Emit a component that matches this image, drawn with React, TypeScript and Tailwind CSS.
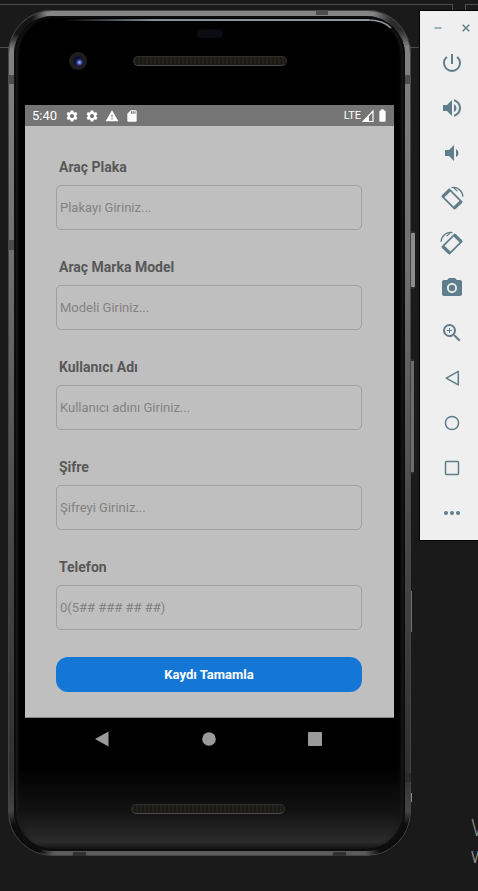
import type { ReactNode } from "react";
import {
  MdBatteryFull,
  MdPhotoCamera,
  MdPowerSettingsNew,
  MdSdCard,
  MdSettings,
  MdVolumeDown,
  MdVolumeUp,
  MdWarning,
  MdZoomIn,
} from "react-icons/md";

type FieldProps = { id: string; label: string; placeholder: string; type?: string };

const fields: FieldProps[] = [
  { id: "plaka", label: "Araç Plaka", placeholder: "Plakayı Giriniz..." },
  { id: "model", label: "Araç Marka Model", placeholder: "Modeli Giriniz..." },
  { id: "kullanici", label: "Kullanıcı Adı", placeholder: "Kullanıcı adını Giriniz..." },
  { id: "sifre", label: "Şifre", placeholder: "Şifreyi Giriniz...", type: "password" },
  { id: "telefon", label: "Telefon", placeholder: "0(5## ### ## ##)", type: "tel" },
];

function Field({ id, label, placeholder, type = "text" }: FieldProps) {
  return (
    <div className="flex flex-col gap-2">
      <label htmlFor={id} className="pl-[3px] text-sm leading-5 font-bold text-[#585858]">
        {label}
      </label>
      <input
        id={id}
        type={type}
        placeholder={placeholder}
        className="h-[45px] w-full rounded-[5px] border border-[#a0a0a0] bg-transparent px-[3px] text-[13px] text-[#585858] outline-none placeholder:text-[#828282]"
      />
    </div>
  );
}

function Speaker() {
  return (
    <div className="h-[10px] w-[154px] rounded-full border border-[#303030] border-b-[#4a4a4a] bg-[repeating-linear-gradient(90deg,#23211c_0px,#23211c_2px,#1a1916_2px,#1a1916_4px)]" />
  );
}

function StatusBar() {
  return (
    <div className="flex h-[21px] items-center justify-between bg-[#757575] pr-1 pl-[7px] text-white">
      <div className="flex items-center gap-2">
        <span className="text-[13px] leading-5">5:40</span>
        <div className="flex items-center gap-[6px]">
          <MdSettings size={14} />
          <MdSettings size={14} />
          <MdWarning size={14} />
          <MdSdCard size={14} />
        </div>
      </div>
      <div className="flex items-center gap-px">
        <span className="text-[11px] leading-5">LTE</span>
        <svg width="12" height="14" viewBox="0 0 12 14" aria-hidden="true">
          <path d="M11 2v10.500H1z" fill="none" stroke="currentColor" strokeWidth="1.200" />
          <path d="M7 6v6.500H1z" fill="currentColor" />
        </svg>
        <MdBatteryFull size={15} />
      </div>
    </div>
  );
}

function NavBar() {
  return (
    <nav className="flex h-[42px] items-center justify-between pr-[67px] pl-[65px] text-[#9b9b9b]">
      <button aria-label="Geri" className="size-6">
        <svg viewBox="0 0 24 24" fill="currentColor">
          <path d="M18.500 4.500v15L5 12z" />
        </svg>
      </button>
      <button aria-label="Ana ekran" className="size-6">
        <svg viewBox="0 0 24 24" fill="currentColor">
          <circle cx="12" cy="12" r="6.800" />
        </svg>
      </button>
      <button aria-label="Son uygulamalar" className="size-6">
        <svg viewBox="0 0 24 24" fill="currentColor">
          <rect x="5" y="5" width="14" height="14" rx="1" />
        </svg>
      </button>
    </nav>
  );
}

function Phone() {
  return (
    <section className="relative flex-1 rounded-[44px] bg-[radial-gradient(circle_at_10px_10px,#151515_14px,transparent_30px),radial-gradient(circle_at_calc(100%-10px)_10px,#2c2c2c_10px,transparent_28px),radial-gradient(circle_at_10px_calc(100%-10px),#0c0c0c_22px,transparent_36px),radial-gradient(circle_at_calc(100%-10px)_calc(100%-10px),#0c0c0c_22px,transparent_36px),linear-gradient(to_bottom,#858585,#707070_30%,#4a4a4a_60%,#303030_90%,#5c5c5c)] px-[6px] pt-[6px] pb-[5px] shadow-[inset_0_0_0_1px_#444444]">
      {/* side keys */}
      <span className="absolute top-[221px] -right-1 h-[58px] w-1 rounded-r-xs border-y-2 border-[#2c2c2c] bg-[#8c8c8c]" />
      <span className="absolute top-[349px] -right-[3px] h-[115px] w-[3px] rounded-r-xs border-y-2 border-[#2c2c2c] bg-[#6c6c6c]" />
      <span className="absolute top-[581px] -right-px h-[41px] w-px bg-[#707070]" />
      <span className="absolute top-[783px] -right-px h-[9px] w-px bg-[#8a8a8a]" />
      {/* antenna bands */}
      <span className="absolute top-[65px] left-0 h-[9px] w-[6px] bg-[#4c4c4c]" />
      <span className="absolute top-[65px] right-0 h-[9px] w-[6px] bg-[#4c4c4c]" />
      <span className="absolute top-[230px] left-0 h-[10px] w-[6px] bg-[#4a4a4a]" />
      <span className="absolute right-0 bottom-[74px] h-[9px] w-[6px] bg-[#2c2c2c]" />
      <span className="absolute top-0 right-[83px] h-[5px] w-3 bg-[#4c4c4c]" />
      <span className="absolute bottom-0 left-[65px] h-1 w-[13px] bg-[#303030]" />
      <span className="absolute right-[65px] bottom-0 h-1 w-[13px] bg-[#303030]" />

      <div className="relative rounded-[39px] bg-[linear-gradient(to_bottom,#000_750px,#121212_795px,#2b2b2b_826px,#101010_834px)] px-[11px] shadow-[inset_0_0_0_2px_#0c0c0c,inset_5px_0_3px_-1px_#1a1a1a,inset_-5px_0_3px_-1px_#1a1a1a]">
        {/* light caught by the top of the glass */}
        <span className="absolute top-[3px] right-[36px] left-[48px] h-[2px] bg-linear-to-r from-transparent via-[#879094] via-30% to-[#8f979b]" />
        <svg viewBox="0 0 24 12" fill="none" className="absolute top-[3px] right-[13px] h-3 w-6" aria-hidden="true">
          <path d="M0 1c9 0 17 2 23 8" stroke="#8f979b" strokeWidth="1.600" />
        </svg>
        <div className="flex flex-col items-center gap-3 pt-[13px] pb-[34px]">
          <div className="h-[9px] w-[26px] rounded-full bg-[#0b0c12]" />
          <div className="grid h-[21px] w-full grid-cols-[1fr_154px_1fr] items-center">
            <div className="ml-11 flex size-[18px] items-center justify-center rounded-full bg-[#1f1f20]">
              <div className="size-[10px] rounded-full bg-[radial-gradient(circle_at_65%_65%,#a9b8ff_0px,#4654b8_2px,#10122e_4px)]" />
            </div>
            <Speaker />
          </div>
        </div>

        <div className="border-b border-[#858585] bg-[#bfbfbf]">
          <StatusBar />
          <form
            onSubmit={(event) => event.preventDefault()}
            className="flex flex-col gap-[27px] pt-[31px] pr-8 pb-[25px] pl-[31px]"
          >
            {fields.map((field) => (
              <Field key={field.id} {...field} />
            ))}
            <button
              type="submit"
              className="h-[35px] w-full rounded-xl bg-[#1477d6] text-[13px] font-bold text-white"
            >
              Kaydı Tamamla
            </button>
          </form>
        </div>

        <NavBar />
        <div className="flex justify-center pt-11 pr-1 pb-[37px]">
          <Speaker />
        </div>
      </div>
    </section>
  );
}

function RotateIcon({ mirrored = false }: { mirrored?: boolean }) {
  return (
    <svg
      viewBox="0 0 24 24"
      fill="none"
      stroke="currentColor"
      className={mirrored ? "size-6 -scale-x-100" : "size-6"}
    >
      <path d="M9.300 3.400 21.700 15.800 14.500 22.600 2.200 10.300z" strokeWidth="1.700" strokeLinejoin="round" />
      <path d="M9.600 4.200 2.900 10.700M21.100 15.500 14.400 21.900" strokeWidth="3.200" strokeLinejoin="round" />
      <path d="M11.500 1.600C17.500 .6 22.500 4.500 23 10.800" strokeWidth="1.300" />
      <path d="M13.500 1.500l3.800 3.600" strokeWidth="1.200" />
    </svg>
  );
}

function Outline({ children }: { children: ReactNode }) {
  return (
    <svg viewBox="0 0 24 24" fill="none" stroke="currentColor" strokeWidth="1.500" strokeLinejoin="round" className="size-6">
      {children}
    </svg>
  );
}

const tools: { name: string; icon: ReactNode }[] = [
  { name: "Power", icon: <MdPowerSettingsNew size={24} /> },
  { name: "Volume up", icon: <MdVolumeUp size={24} /> },
  { name: "Volume down", icon: <MdVolumeDown size={24} /> },
  { name: "Rotate left", icon: <RotateIcon /> },
  { name: "Rotate right", icon: <RotateIcon mirrored /> },
  { name: "Take screenshot", icon: <MdPhotoCamera size={24} /> },
  { name: "Zoom", icon: <MdZoomIn size={24} /> },
  { name: "Back", icon: <Outline><path d="M18.300 5.300v13.600L6.200 12.100z" /></Outline> },
  { name: "Home", icon: <Outline><circle cx="12" cy="12" r="6.600" /></Outline> },
  { name: "Overview", icon: <Outline><rect x="5.500" y="5.500" width="13" height="13" rx="1" /></Outline> },
  {
    name: "More",
    icon: (
      <svg viewBox="0 0 24 24" fill="currentColor" className="size-6">
        <circle cx="6" cy="12" r="2" />
        <circle cx="12" cy="12" r="2" />
        <circle cx="18" cy="12" r="2" />
      </svg>
    ),
  },
];

function Toolbar() {
  return (
    <aside className="flex w-[59px] shrink-0 flex-col gap-[17px] border-y border-l border-black bg-[#efefef] pt-[11px] pb-[15px] pl-3 text-[#607d8b]">
      <div className="flex gap-4">
        <button aria-label="Minimize" className="size-3 text-[#9db0b9]">
          <svg viewBox="0 0 12 12" stroke="currentColor" strokeWidth="2">
            <path d="M2.500 6h7" />
          </svg>
        </button>
        <button aria-label="Close" className="size-3">
          <svg viewBox="0 0 12 12" stroke="currentColor" strokeWidth="1.500">
            <path d="M2.700 2.700l6.600 6.600M9.300 2.700l-6.600 6.600" />
          </svg>
        </button>
      </div>
      <div className="flex flex-col items-start gap-[21px] pl-2">
        {tools.map((tool) => (
          <button key={tool.name} aria-label={tool.name} className="size-6">
            {tool.icon}
          </button>
        ))}
      </div>
    </aside>
  );
}

export default function App() {
  return (
    <main className="relative min-h-screen overflow-hidden bg-[#1a1a1a] font-[Roboto,sans-serif]">
      {/* edges of the windows behind the emulator */}
      <div className="absolute top-1 right-[25px] left-0 h-11 border-y border-r border-[#4d4d4d]" />
      <div className="absolute top-1 right-0 h-11 w-[13px] border-t border-l border-[#4d4d4d]" />

      <div className="relative flex items-start gap-2 pt-[10px] pl-2">
        <Phone />
        <Toolbar />
      </div>

      {/* desktop watermark running past the right edge */}
      <div className="absolute right-0 bottom-5 w-[7px] overflow-hidden font-['Open_Sans',sans-serif] text-[#8f8f8f]">
        <p className="text-2xl leading-8 font-light">W</p>
        <p className="text-base leading-7">W</p>
      </div>
    </main>
  );
}
